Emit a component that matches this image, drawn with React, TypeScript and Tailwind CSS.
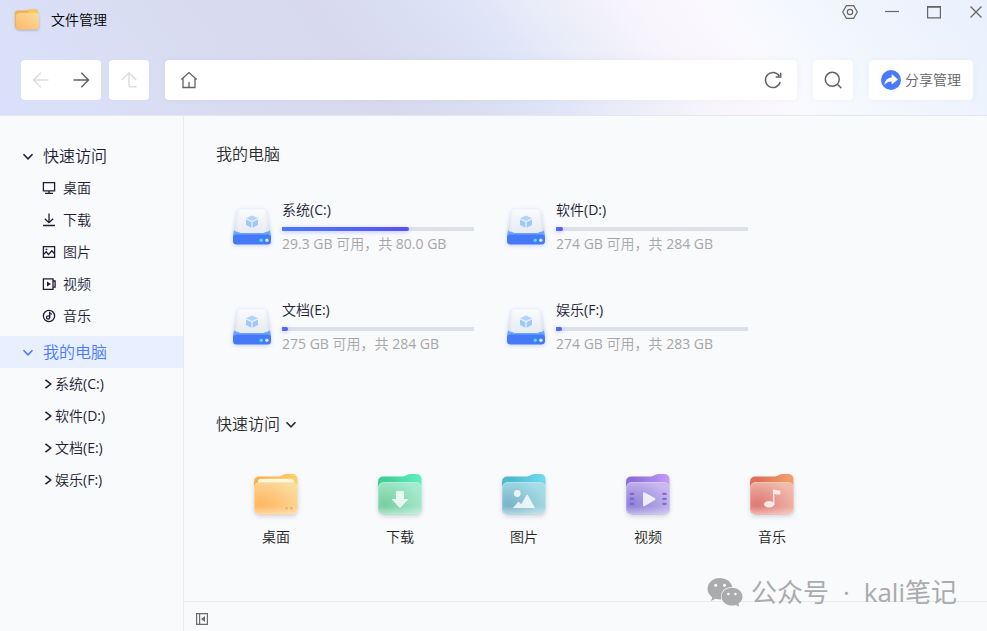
import React from 'react';

type KindName = 'desktop' | 'download' | 'picture' | 'video' | 'music';

interface Drive {
  name: string;
  letter: string;
  free: string;
  total: string;
  used: number;
}

const drives: Drive[] = [
  { name: '系统', letter: 'C', free: '29.3 GB', total: '80.0 GB', used: 66 },
  { name: '软件', letter: 'D', free: '274 GB', total: '284 GB', used: 3.5 },
  { name: '文档', letter: 'E', free: '275 GB', total: '284 GB', used: 3 },
  { name: '娱乐', letter: 'F', free: '274 GB', total: '283 GB', used: 3 },
];

const folders: { kind: KindName; name: string }[] = [
  { kind: 'desktop', name: '桌面' },
  { kind: 'download', name: '下载' },
  { kind: 'picture', name: '图片' },
  { kind: 'video', name: '视频' },
  { kind: 'music', name: '音乐' },
];

// back start/end, front start/end, shade at the bottom left
const folderColors: Record<KindName, string[]> = {
  desktop: ['#fbb04f', '#fdd268', '#f9dd9f', '#fdd08a', '#ffb762'],
  download: ['#3fcf97', '#5ff0c0', '#a3ecce', '#a2e6c8', '#77cfa0'],
  picture: ['#4fb9cf', '#70daf0', '#a6dfe9', '#a3d5df', '#7ab4c9'],
  video: ['#8c6fdc', '#c49bf8', '#cbbaf0', '#b7ace8', '#9183d8'],
  music: ['#df7158', '#f3a26c', '#f2bcae', '#eeaca1', '#de7a74'],
};

const SidebarIcon = ({ kind }: { kind: KindName }) => (
  <svg className="h-4 w-4 shrink-0" viewBox="0 0 16 16" fill="none" stroke="currentColor" strokeWidth="1.3">
    {kind === 'desktop' && <path d="M2.4 2.6h11.2v8.2H2.4zM8 10.8v2.6M4 13.4h8" />}
    {kind === 'download' && <path d="M8 1.5v9M3.8 6.7 8 10.7l4.2-4M2 13.5h12" />}
    {kind === 'picture' && (
      <>
        <path d="M2.4 2.6h11.2v10.8H2.4zM2.4 10.6l2.8-2.8 2.3 2.8 3.3-3.8 2.8 3" />
        <circle cx="5.5" cy="5.3" r=".9" fill="currentColor" stroke="none" />
      </>
    )}
    {kind === 'video' && (
      <>
        <path d="M2.4 2.8H12v10.6H2.4zM12 5h2.1v6.1H12" />
        <path d="m6 5.6 4 2.5-4 2.5z" fill="currentColor" stroke="none" />
      </>
    )}
    {kind === 'music' && (
      <>
        <circle cx="8" cy="8" r="5.6" />
        <circle cx="7.1" cy="9.4" r="1.6" />
        <path d="M8.7 9.4V3.8M8.7 4.4c.3 1.2 1.1 1.7 2.2 1.8" />
      </>
    )}
  </svg>
);

const Chevron = ({ right = false }: { right?: boolean }) => (
  <svg className="h-3 w-3 shrink-0" viewBox="0 0 12 12" fill="none" stroke="currentColor" strokeWidth="1.6">
    <path d={right ? 'M2.5 1.8 7.7 6l-5.2 4.2' : 'M1.5 4.3 6 8.8l4.5-4.5'} />
  </svg>
);

const FolderIcon = ({ kind }: { kind: KindName }) => {
  const [backA, backB, frontA, frontB, shade] = folderColors[kind];
  return (
    <svg className="h-12 w-12 drop-shadow-[0_2px_2px_rgba(40,50,80,0.18)]" viewBox="0 0 48 48">
      <defs>
        <linearGradient id={`back-${kind}`}>
          <stop offset=".2" stopColor={backA} />
          <stop offset="1" stopColor={backB} />
        </linearGradient>
        <linearGradient id={`front-${kind}`} x1="0" y1="0" x2="0" y2="1">
          <stop offset="0" stopColor={frontA} />
          <stop offset="1" stopColor={frontB} />
        </linearGradient>
        <radialGradient id={`shade-${kind}`} cx=".15" cy=".7" r=".85">
          <stop offset="0" stopColor={shade} />
          <stop offset="1" stopColor={shade} stopOpacity="0" />
        </radialGradient>
        <linearGradient id={`glow-${kind}`} x1="0" y1="0" x2="0" y2="1">
          <stop offset=".75" stopColor="#fff" stopOpacity="0" />
          <stop offset="1" stopColor="#fff" stopOpacity=".35" />
        </linearGradient>
      </defs>
      <path d="M2 12q0-5.500 5.500-5.500H26c4 0 5-2.500 9-2.500h5q5.500 0 5.500 5.500V33H2z" fill={`url(#back-${kind})`} />
      {kind === 'desktop' && <rect x="6" y="8.8" width="36" height="10" rx="3" fill="#fff6dc" />}
      <rect x="2" y="12" width="44" height="32.5" rx="6" fill={`url(#front-${kind})`} />
      <rect x="2" y="12" width="44" height="32.5" rx="6" fill={`url(#shade-${kind})`} />
      <rect x="2.4" y="12.4" width="43.2" height="31.7" rx="5.6" fill={`url(#glow-${kind})`} stroke="#fff" strokeOpacity=".3" strokeWidth=".8" />
      {kind === 'desktop' && (
        <g fill="#f4a955">
          <circle cx="34.6" cy="38.3" r="1.2" />
          <circle cx="39.4" cy="38.3" r="1.2" />
        </g>
      )}
      {kind === 'download' && (
        <path d="M20 22q0-1 1-1h6q1 0 1 1v7h3.500q1 0 .3 1l-7 7.300q-.8.8-1.600 0l-7-7.300q-.7-1 .3-1H20z" fill="#fff" fillOpacity=".8" />
      )}
      {kind === 'picture' && (
        <g fill="#fff" fillOpacity=".8">
          <circle cx="17.3" cy="23.5" r="3.4" />
          <path d="m13 38 5-6q.5-.6 1 0l2.2 2.3L26.6 25q.6-1 1.2 0L35 38z" />
        </g>
      )}
      {kind === 'video' && (
        <>
          <path d="M19 23.500q0-2 1.800-1l10 5.600q1.600.9 0 1.800l-10 6q-1.800 1-1.800-1z" fill="#fff" fillOpacity=".82" />
          <path d="M6.800 23.800h2.400M6.800 28.800h2.400M6.800 33.800h2.400M39.300 23.800h2.400M39.300 28.800h2.400M39.300 33.800h2.400" stroke="#8060cf" strokeOpacity=".9" strokeWidth="2.2" strokeLinecap="round" />
        </>
      )}
      {kind === 'music' && (
        <g fill="#fff" fillOpacity=".8">
          <ellipse cx="21.2" cy="34.2" rx="5.2" ry="3.2" />
          <path d="M25 19.300q5 1.700 7.300 1.200v3.900q-3 .5-5.900-.7v10.800H25z" />
        </g>
      )}
    </svg>
  );
};

const DriveIcon = () => (
  <svg className="mt-[9px] h-10 w-10 shrink-0 drop-shadow-[0_1px_2px_rgba(70,120,255,0.3)]" viewBox="0 0 40 40">
    <defs>
      <linearGradient id="drive-top" x1="0" y1="0" x2="0" y2="1">
        <stop offset="0" stopColor="#fafbfc" />
        <stop offset="1" stopColor="#e6ebf2" />
      </linearGradient>
      <linearGradient id="drive-edge">
        <stop offset="0" stopColor="#cfd6e0" stopOpacity=".7" />
        <stop offset=".2" stopColor="#fff" stopOpacity="0" />
        <stop offset=".8" stopColor="#fff" stopOpacity="0" />
        <stop offset="1" stopColor="#cfd6e0" stopOpacity=".7" />
      </linearGradient>
    </defs>
    <path d="M2 23h36l1 6v5H1v-5z" fill="#6ba5fd" />
    <path d="M9.300 2.300h21.400q3.400 0 4 3L37.800 21q.5 3.300-2 3.500-1.500 0-3.300 1-1 .5-2 .5H9.500q-1 0-2-.5-1.800-1-3.300-1-2.500-.2-2-3.500L5.300 5.300q.6-3 4-3z" fill="url(#drive-top)" />
    <path d="M9.300 2.300h21.400q3.400 0 4 3L37.800 21q.5 3.300-2 3.500-1.500 0-3.300 1-1 .5-2 .5H9.500q-1 0-2-.5-1.800-1-3.300-1-2.500-.2-2-3.500L5.300 5.300q.6-3 4-3z" fill="url(#drive-edge)" />
    <path d="m20 8.500 6 2.700-6 2.800-6-2.800z" fill="#b0d3ff" />
    <path d="m14 12.500 5.400 2.500v5.800L14 18zM26 12.500 20.600 15v5.800L26 18z" fill="#9fc8fa" />
    <rect x="1" y="27.5" width="38" height="10" rx="3.5" fill="#4679f8" />
    <circle cx="29.2" cy="33.3" r="1.7" fill="#3fe3e8" />
    <circle cx="34.9" cy="33.3" r="1.7" fill="#d5e4ff" />
  </svg>
);

const WindowControls = () => (
  <div className="flex h-6 items-center text-[#666]">
    <button aria-label="设置" className="flex w-10 justify-center">
      <svg className="h-4 w-4" viewBox="0 0 16 16" fill="none" stroke="currentColor" strokeWidth="1.2">
        <path d="M4.4 1.600h7.200L15.300 8l-3.700 6.400H4.400L.7 8z" />
        <circle cx="8" cy="8" r="2.7" />
      </svg>
    </button>
    <button aria-label="最小化" className="flex w-11 justify-center">
      <svg className="h-4 w-4" viewBox="0 0 16 16" stroke="currentColor" strokeWidth="1.2">
        <path d="M1 7.500h14" />
      </svg>
    </button>
    <button aria-label="最大化" className="flex w-10 justify-center">
      <svg className="h-4 w-4" viewBox="0 0 16 16" fill="none" stroke="currentColor" strokeWidth="1.2">
        <path d="M1.600 2.500h12.800v11.300H1.600z" />
        <path d="M1 3h14" strokeWidth="1.6" />
      </svg>
    </button>
    <button aria-label="关闭" className="flex w-[33px] justify-end pr-[3px]">
      <svg className="h-4 w-4" viewBox="0 0 16 16" fill="none" stroke="currentColor" strokeWidth="1.3">
        <path d="m2.500 2.500 11 11M13.500 2.500l-11 11" />
      </svg>
    </button>
  </div>
);

const Toolbar = () => (
  <div className="flex h-10 pr-[14px] pl-[21px] text-[#606266]">
    <div className="flex rounded bg-white">
      <button aria-label="后退" disabled className="flex w-10 items-center justify-center text-[#ddd]">
        <svg className="h-5 w-5" viewBox="0 0 20 20" fill="none" stroke="currentColor" strokeWidth="1.5">
          <path d="M17.500 10H2.700M9.700 2.800 2.500 10l7.200 7.200" />
        </svg>
      </button>
      <button aria-label="前进" className="flex w-10 items-center justify-center">
        <svg className="h-5 w-5" viewBox="0 0 20 20" fill="none" stroke="currentColor" strokeWidth="1.5">
          <path d="M2.500 10h14.800M10.300 2.800l7.200 7.200-7.200 7.200" />
        </svg>
      </button>
    </div>
    <button aria-label="上一级" disabled className="ml-2 flex w-10 items-center justify-center rounded bg-white text-[#ddd]">
      <svg className="h-5 w-5" viewBox="0 0 20 20" fill="none" stroke="currentColor" strokeWidth="1.5">
        <path d="M2.800 10 10 2.800l7.200 7.200M10 3v11.500q0 2.300 2.300 2.300h5.200" />
      </svg>
    </button>
    <div className="ml-4 flex flex-1 items-center rounded bg-white px-[14px] shadow-[0_0_6px_rgba(90,100,150,0.06)]">
      <svg className="h-5 w-5 shrink-0" viewBox="0 0 20 20" fill="none" stroke="currentColor" strokeWidth="1.3">
        <path d="M2.300 9.600 10 2.600l7.700 7M4 8.300v9.200h12V8.300M10 12v5.500" />
      </svg>
      <input aria-label="路径" className="mx-2 h-8 min-w-0 flex-1 bg-transparent text-sm outline-none" />
      <button aria-label="刷新">
        <svg className="h-5 w-5" viewBox="0 0 20 20" fill="none" stroke="currentColor" strokeWidth="1.5">
          <path d="M17.200 12A7.500 7.500 0 1 1 16.300 6M17.700 2.800v4.300h-5.100" />
        </svg>
      </button>
    </div>
    <button aria-label="搜索" className="ml-4 flex w-10 items-center justify-center rounded bg-white shadow-[0_0_6px_rgba(90,100,150,0.06)]">
      <svg className="h-5 w-5" viewBox="0 0 20 20" fill="none" stroke="currentColor" strokeWidth="1.5">
        <circle cx="9.3" cy="9.3" r="7" />
        <path d="m14.300 14.300 4 3.800" />
      </svg>
    </button>
    <button className="ml-4 flex items-center gap-1 rounded bg-white px-3 text-sm shadow-[0_0_6px_rgba(90,100,150,0.06)]">
      <svg className="h-5 w-5" viewBox="0 0 20 20">
        <circle cx="10" cy="10" r="10" fill="#4879ff" />
        <path d="M10.600 4.900q0-.8.700-.3l5.200 4.300q.6.600 0 1.100l-5.200 4q-.7.500-.7-.3v-2.300c-3.500-.1-5.400 1.100-7.200 3.600.2-4.200 2.700-7.300 7.200-7.600z" fill="#fff" />
      </svg>
      分享管理
    </button>
  </div>
);

const DriveName = ({ drive }: { drive: Drive }) => (
  <span>
    {drive.name}
    <span className="font-normal">({drive.letter}:)</span>
  </span>
);

const Sidebar = () => (
  <nav className="w-[184px] shrink-0 border-r border-[#e8eaef] pt-6 text-sm text-[#211d38]">
    <button className="flex h-8 w-full items-center gap-[9px] pl-[22px] text-base">
      <Chevron />
      快速访问
    </button>
    <ul>
      {folders.map((item) => (
        <li key={item.kind}>
          <a href="#" className="flex h-8 items-center gap-[6px] pl-[41px]">
            <SidebarIcon kind={item.kind} />
            {item.name}
          </a>
        </li>
      ))}
    </ul>
    <button className="mt-1 flex h-8 w-full items-center gap-[9px] bg-[#e8f0ff] pl-[22px] text-base text-[#4879ff]">
      <Chevron />
      我的电脑
    </button>
    <ul>
      {drives.map((drive) => (
        <li key={drive.letter}>
          <a href="#" className="flex h-8 items-center pl-[43px]">
            <Chevron right />
            <DriveName drive={drive} />
          </a>
        </li>
      ))}
    </ul>
  </nav>
);

const DriveCard = ({ drive }: { drive: Drive }) => (
  <a href="#" className="flex items-start gap-[10px]">
    <DriveIcon />
    <div className="min-w-0 flex-1">
      <p className="text-sm leading-6 text-[#211d38]">
        <DriveName drive={drive} />
      </p>
      <div className="mt-[5px] mb-[3px] h-1 bg-[#dce0ea]">
        <div
          className="h-1 rounded-r-xs bg-linear-to-r from-[#4879ff] to-[#5a50f2] shadow-[0_1px_4px_rgba(80,100,255,0.35)]"
          style={{ width: `${drive.used}%` }}
        />
      </div>
      <p className="text-sm leading-5 whitespace-nowrap text-[#a6a6a6]">
        <span className="font-normal">{drive.free}</span> 可用，共 <span className="font-normal">{drive.total}</span>
      </p>
    </div>
  </a>
);

const Watermark = () => (
  <div className="pointer-events-none absolute right-[30px] bottom-[21px] flex items-center gap-2 text-[26px] leading-9 font-normal text-[#aaabad]">
    <svg className="h-9 w-9" viewBox="0 0 36 36" fill="currentColor">
      <path d="M13 4C6 4 .5 8.800.5 14.800c0 3.400 1.900 6.400 4.700 8.400L4 27l4.500-2.300q2.200.7 4.500.7h1.300C12.500 18.500 17.500 13 25.300 13 24.200 7.800 19.200 4 13 4z" />
      <path d="M25 13.800c-5.800 0-10.500 3.900-10.500 8.900S19.200 31.500 25 31.500q2 0 3.800-.6l3.600 1.900-1-3.200c2.500-1.700 4.100-4.100 4.100-6.900 0-5-4.700-8.900-10.500-8.900z" />
      <g fill="#f9fafc">
        <circle cx="8.7" cy="11.3" r="1.5" />
        <circle cx="17.5" cy="11.3" r="1.5" />
        <circle cx="21.4" cy="20" r="1.3" />
        <circle cx="28.4" cy="20" r="1.3" />
      </g>
    </svg>
    <p className="flex gap-[14px]">
      <span>公众号</span>
      <span>·</span>
      <span>kali笔记</span>
    </p>
  </div>
);

const App: React.FC = () => {
  return (
    <div className="relative flex min-h-screen flex-col bg-[#f9fafc] font-['Open_Sans','Noto_Sans_CJK_SC',sans-serif] font-[350]">
      <header className="flex flex-col border-b border-[#e5e7f0] bg-[linear-gradient(52deg,#dae0f9_0%,#dae0f8_8%,#d8dcf1_22%,#d8d9ee_37%,#d9def2_44%,#dfe5f7_52%,#edeef9_60%,#f8f5fc_67%,#faf9fe_74%,#f5f9fe_80%,#edf3fd_92%,#e9f1fd_100%)] pb-[15px]">
        <div className="flex h-15 items-start justify-between pl-[14px]">
          <h1 className="flex h-10 items-center gap-[11px] text-sm font-[350] text-black">
            <svg className="h-[26px] w-[26px] drop-shadow-[0_1px_1px_rgba(60,60,90,0.3)]" viewBox="0 0 26 26">
              <defs>
                <linearGradient id="logo-front" x1="0" y1="1" x2="1" y2="0">
                  <stop offset="0" stopColor="#ffb966" />
                  <stop offset="1" stopColor="#f8dca0" />
                </linearGradient>
              </defs>
              <path d="M1 6q0-2.500 2.500-2.500H13c2 0 3-1.500 5-1.500h3q2.500 0 2.500 2.500V12L3 21q-2 0-2-3z" fill="#f7b04e" />
              <path d="M15 3.200Q16.500 2 18 2h3q2.500 0 2.500 2.500V10H13z" fill="#f8ca58" />
              <rect x="2" y="6" width="23" height="16.5" rx="3" fill="url(#logo-front)" />
            </svg>
            文件管理
          </h1>
          <WindowControls />
        </div>
        <Toolbar />
      </header>

      <div className="flex flex-1">
        <Sidebar />
        <div className="flex min-w-0 flex-1 flex-col">
          <main className="flex-1 px-8 pt-[26px]">
            <h2 className="text-base font-[350] text-[#2a2a2e]">我的电脑</h2>
            <div className="mt-8 grid grid-cols-[repeat(auto-fill,242px)] gap-x-8 gap-y-11 pl-4">
              {drives.map((drive) => (
                <DriveCard key={drive.letter} drive={drive} />
              ))}
            </div>

            <h2 className="mt-[58px] text-base font-[350] text-[#2a2a2e]">
              <button className="flex items-center gap-[5px]">
                快速访问
                <Chevron />
              </button>
            </h2>
            <div className="mt-[34px] flex flex-wrap gap-11 pl-5">
              {folders.map((folder) => (
                <a key={folder.kind} href="#" className="flex w-20 flex-col items-center gap-[9px] text-sm text-[#222]">
                  <FolderIcon kind={folder.kind} />
                  {folder.name}
                </a>
              ))}
            </div>
          </main>

          <footer className="flex h-[30px] items-center border-t border-[#e8eaef] px-3 pt-[5px]">
            <button aria-label="收起侧栏" className="text-[#6b6b6b]">
              <svg className="h-3 w-3" viewBox="0 0 12 12" fill="none" stroke="currentColor" strokeWidth="1.2">
                <path d="M.6.6h10.800v10.800H.6zM3.600.6v10.800" />
                <path d="M9 3v6L5 6z" fill="currentColor" stroke="none" />
              </svg>
            </button>
          </footer>
        </div>
      </div>

      <Watermark />
    </div>
  );
};

export default App;
